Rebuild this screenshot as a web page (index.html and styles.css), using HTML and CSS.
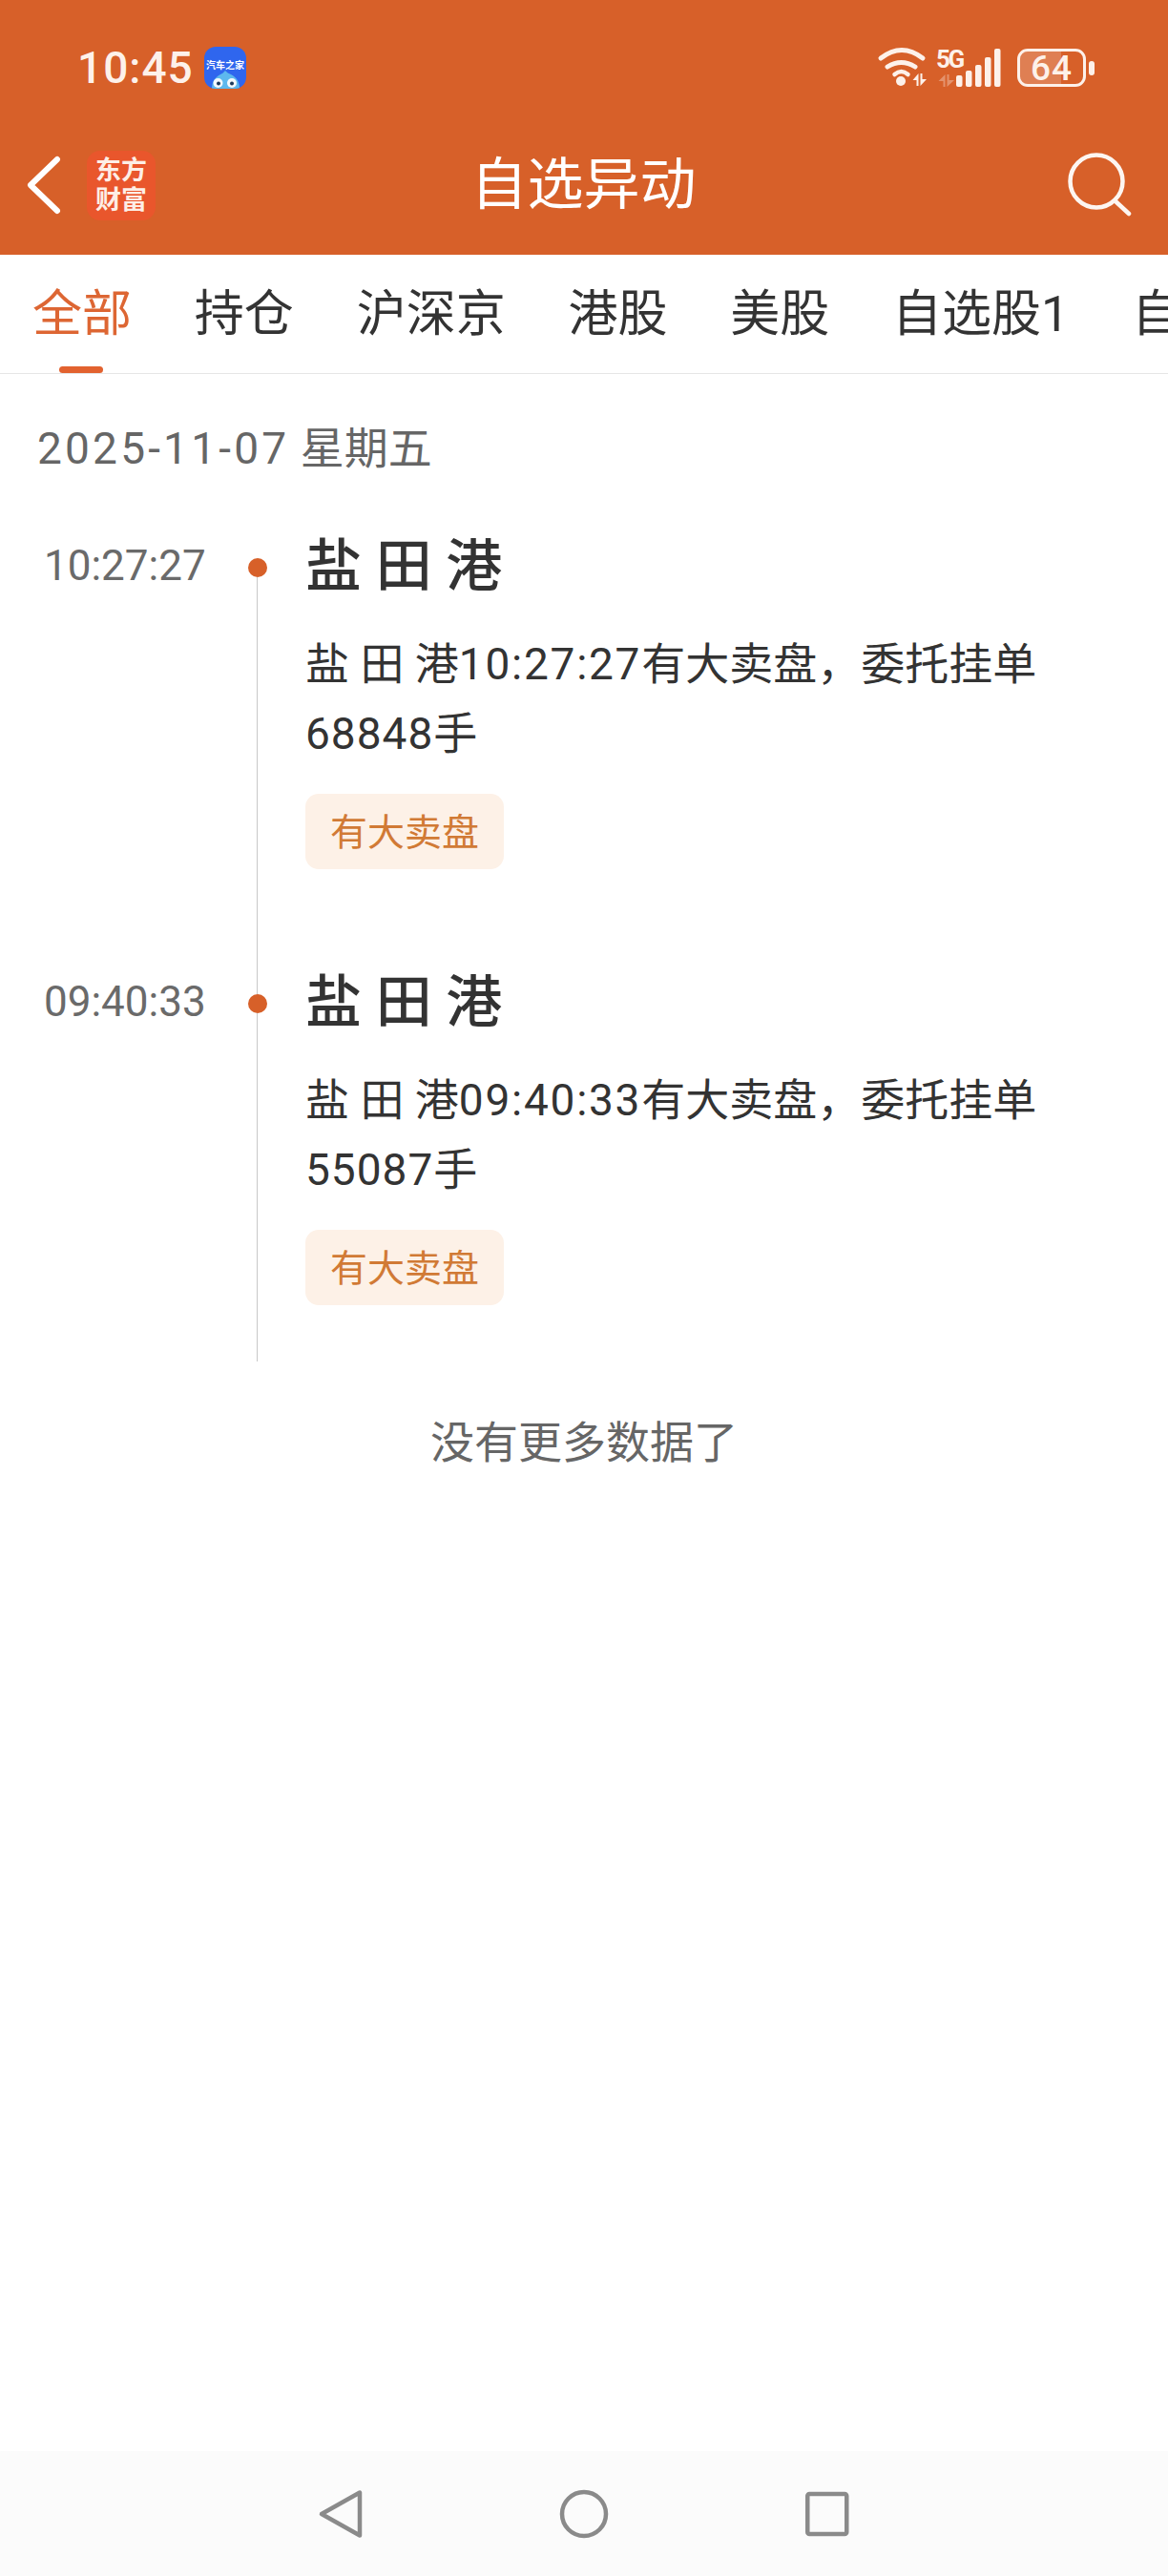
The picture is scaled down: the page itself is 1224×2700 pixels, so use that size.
FILE: index.html
```html
<!DOCTYPE html>
<html lang="zh-CN">
<head>
  <meta charset="UTF-8" />
  <meta name="viewport" content="width=device-width, initial-scale=1.0" />
  <title>自选异动</title>
  <link rel="stylesheet" href="styles.css">
</head>
<body>

  <div class="page">

    <header class="top">
      <div class="status">
        <span class="clock">10:45</span>
        <svg class="app-icon" width="44" height="44" viewBox="0 0 44 44">
          <rect width="44" height="44" fill="#2f66ee" />
          <text class="app-icon-text" x="22" y="23" text-anchor="middle">汽车之家</text>
          <path d="M22 25c-1.500 2-3 3-5 4-6 3-9 8-9 15h29c0-7-3-12-9-15-2-1-4.500-2-6-4z" fill="#5db8ee" />
          <circle cx="14.500" cy="38" r="5" fill="#f4f9fd" />
          <circle cx="29" cy="38" r="5" fill="#f4f9fd" />
          <circle cx="15" cy="38.500" r="2" fill="#1d3a5c" />
          <circle cx="29" cy="38.500" r="2" fill="#1d3a5c" />
        </svg>
        <div class="status-right">
          <svg class="signals" width="130" height="42" viewBox="0 0 130 42">
            <g fill="none" stroke="#fdf1ea" stroke-width="5" stroke-linecap="round">
              <path d="M3 11Q25 -6 47 11" />
              <path d="M10 20Q24.500 11 39 20" />
              <path d="M17.500 28Q24.500 22 31.500 28" stroke-width="4.500" />
            </g>
            <circle cx="24" cy="35" r="5" fill="#fdf1ea" />
            <path d="M42.500 27V40H40.500V34H36.500zM44.500 27H46.500V33H51L44.500 40z" fill="#fdf1ea" />
            <path d="M70.500 28V41H68.500V35H63.500zM72.500 28H74.500V34H80L72.500 41z" fill="#fdf1ea" opacity="0.35" />
            <text class="net-type" x="61" y="21">5G</text>
            <g fill="#fdf1ea">
              <rect x="82" y="29" width="6.500" height="12" rx="2" />
              <rect x="92" y="24" width="6.500" height="17" rx="2" />
              <rect x="102" y="18" width="6.500" height="23" rx="2" />
              <rect x="112" y="10" width="6.500" height="31" rx="2" />
              <rect x="122" y="1" width="6.500" height="40" rx="2" />
            </g>
          </svg>
          <div class="battery">
            <div class="battery-fill"></div>
            <span class="battery-level">64</span>
          </div>
          <div class="battery-cap"></div>
        </div>
      </div>

      <div class="navbar">
        <svg class="back" width="37" height="62" viewBox="0 0 37 62">
          <path d="M32 4L4 31L32 58" fill="none" stroke="#fff" stroke-width="6" stroke-linecap="round" stroke-linejoin="round" />
        </svg>
        <div class="logo">东方<br>财富</div>
        <h1 class="nav-title">自选异动</h1>
        <svg class="search" width="70" height="70" viewBox="0 0 70 70">
          <circle cx="33" cy="31" r="27.500" fill="none" stroke="#fdf6f1" stroke-width="4.500" />
          <path d="M53 52L67 65" fill="none" stroke="#fdf6f1" stroke-width="4.500" stroke-linecap="round" />
        </svg>
      </div>
    </header>

    <nav class="tabs">
      <a class="tab active">全部</a>
      <a class="tab">持仓</a>
      <a class="tab">沪深京</a>
      <a class="tab">港股</a>
      <a class="tab">美股</a>
      <a class="tab">自选股1</a>
      <a class="tab">自选股2</a>
    </nav>

    <main class="content">
      <div class="date"><span class="date-num">2025-11-07</span> 星期五</div>

      <div class="timeline">
        <div class="entry">
          <div class="time">10:27:27</div>
          <div class="rail">
            <div class="rail-stub"></div>
            <div class="rail-dot"></div>
            <div class="rail-line"></div>
          </div>
          <div class="entry-body">
            <h2 class="stock">盐 田 港</h2>
            <p class="desc">盐 田 港<span class="desc-time">10:27:27</span>有大卖盘，委托挂单<span class="desc-vol">68848</span>手</p>
            <span class="tag">有大卖盘</span>
          </div>
        </div>

        <div class="entry">
          <div class="time">09:40:33</div>
          <div class="rail">
            <div class="rail-stub"></div>
            <div class="rail-dot"></div>
            <div class="rail-line"></div>
          </div>
          <div class="entry-body">
            <h2 class="stock">盐 田 港</h2>
            <p class="desc">盐 田 港<span class="desc-time">09:40:33</span>有大卖盘，委托挂单<span class="desc-vol">55087</span>手</p>
            <span class="tag">有大卖盘</span>
          </div>
        </div>
      </div>

      <div class="no-more">没有更多数据了</div>
    </main>

    <footer class="sysnav">
      <svg width="52" height="52" viewBox="0 0 52 52">
        <path d="M45 3.500V48.500L5 26z" fill="none" stroke="#8a8a8a" stroke-width="4.500" stroke-linejoin="round" />
      </svg>
      <svg width="52" height="52" viewBox="0 0 52 52">
        <circle cx="26" cy="26" r="23" fill="none" stroke="#8a8a8a" stroke-width="4.500" />
      </svg>
      <svg width="52" height="52" viewBox="0 0 52 52">
        <rect x="6.250" y="5" width="41" height="42" rx="2" fill="none" stroke="#8a8a8a" stroke-width="4.500" />
      </svg>
    </footer>

  </div>

</body>
</html>
```

FILE: styles.css
```css
body {
  margin: 0;
  font-family: Roboto, 'Noto Sans CJK SC', sans-serif;
  color: #333;
  background: #fff;
}
h1, h2, p {
  margin: 0;
  font-weight: 400;
}
.page {
  display: flex;
  flex-direction: column;
  height: 2700px;
  overflow: hidden;
}

/* status bar + title bar */
.top {
  background: #d76029;
  color: #fff;
  height: 267px;
}
.status {
  display: flex;
  align-items: center;
  height: 44px;
  padding: 49px 77px 0 81px;
}
.clock {
  font-size: 46px;
  font-weight: 500;
  letter-spacing: 1px;
  color: #fdf1ea;
  width: 133px;
}
.app-icon {
  border-radius: 12px;
}
.app-icon-text {
  font-size: 10px;
  font-weight: 700;
  fill: #fff;
}
.status-right {
  display: flex;
  align-items: center;
  margin-left: auto;
}
.signals {
  overflow: visible;
}
.net-type {
  font-size: 26px;
  font-weight: 700;
  letter-spacing: -2.500px;
  fill: #fdf1ea;
}
.battery {
  position: relative;
  box-sizing: border-box;
  width: 72px;
  height: 40px;
  margin-left: 16px;
  border: 3.500px solid #fdf1ea;
  border-radius: 11px;
  overflow: hidden;
  display: flex;
  align-items: center;
  justify-content: center;
}
.battery-fill {
  position: absolute;
  left: 0;
  top: 0;
  bottom: 0;
  width: 43px;
  background: rgba(255, 255, 255, 0.2);
}
.battery-level {
  position: relative;
  font-size: 37px;
  font-weight: 500;
  letter-spacing: 1px;
  color: #fdf1ea;
}
.battery-cap {
  width: 6px;
  height: 15px;
  margin-left: 3px;
  border-radius: 3px;
  background: #fdf1ea;
}
.navbar {
  display: flex;
  align-items: center;
  height: 148px;
  margin-top: 27px;
  padding: 0 38px 0 28px;
}
.back {
  flex-shrink: 0;
}
.logo {
  width: 72px;
  height: 73px;
  margin-left: 26px;
  border-radius: 14px;
  background: #e9562c;
  font-size: 27px;
  font-weight: 700;
  line-height: 31px;
  text-align: center;
  padding-top: 6px;
  box-sizing: border-box;
  color: #fdeee6;
  flex-shrink: 0;
}
.nav-title {
  flex: 1;
  font-size: 59px;
  line-height: 70px;
  text-align: center;
  color: #fff;
  padding-right: 56px;
}
.search {
  flex-shrink: 0;
}

/* tabs */
.tabs {
  display: flex;
  gap: 65.800px;
  height: 124px;
  padding-left: 34px;
  border-bottom: 1px solid #e6e6e6;
  overflow: hidden;
}
.tab {
  position: relative;
  flex-shrink: 0;
  font-size: 52px;
  line-height: 126px;
  color: #333;
}
.tab.active {
  color: #dd6633;
}
.tab.active::after {
  content: "";
  position: absolute;
  left: 28px;
  bottom: 0;
  width: 46px;
  height: 7px;
  border-radius: 4px;
  background: #e2622f;
}

/* list */
.content {
  flex: 1;
}
.date {
  margin: 48px 0 56px 39px;
  font-size: 46px;
  line-height: 60px;
  color: #666;
}
.date-num {
  letter-spacing: 3.200px;
}
.entry {
  display: grid;
  grid-template-columns: 202px 44px 1fr;
  padding-left: 46px;
}
.time {
  font-size: 44px;
  line-height: 75px;
  color: #6a6a6a;
}
.rail {
  display: flex;
  flex-direction: column;
  align-items: center;
}
.rail-stub {
  width: 1px;
  height: 29px;
  margin-right: 1px;
  background: #c8c8c8;
}
.entry:first-child .rail-stub {
  background: transparent;
}
.rail-dot {
  width: 20px;
  height: 20px;
  border-radius: 50%;
  background: #d76029;
  flex-shrink: 0;
}
.rail-line {
  width: 1px;
  flex: 1;
  margin-right: 1px;
  background: #c8c8c8;
}
.entry-body {
  margin-left: 28px;
  padding-bottom: 102px;
  max-width: 780px;
}
.entry:last-child .entry-body {
  padding-bottom: 59px;
}
.stock {
  font-size: 59px;
  font-weight: 500;
  line-height: 76px;
  color: #333;
}
.desc {
  margin-top: 28px;
  font-size: 46px;
  line-height: 73px;
  color: #333;
}
.desc-time {
  letter-spacing: 1.750px;
}
.desc-vol {
  letter-spacing: 1px;
}
.tag {
  display: inline-block;
  margin-top: 26px;
  padding: 0 26px;
  height: 79px;
  line-height: 83px;
  border-radius: 14px;
  background: #fdf1e7;
  color: #d17a35;
  font-size: 39px;
  vertical-align: top;
}
.no-more {
  margin-top: 55px;
  font-size: 46px;
  line-height: 60px;
  text-align: center;
  color: #666;
}

/* android nav bar */
.sysnav {
  display: flex;
  align-items: center;
  justify-content: center;
  gap: 202px;
  height: 131px;
  background: #fbfbfb;
}
```
